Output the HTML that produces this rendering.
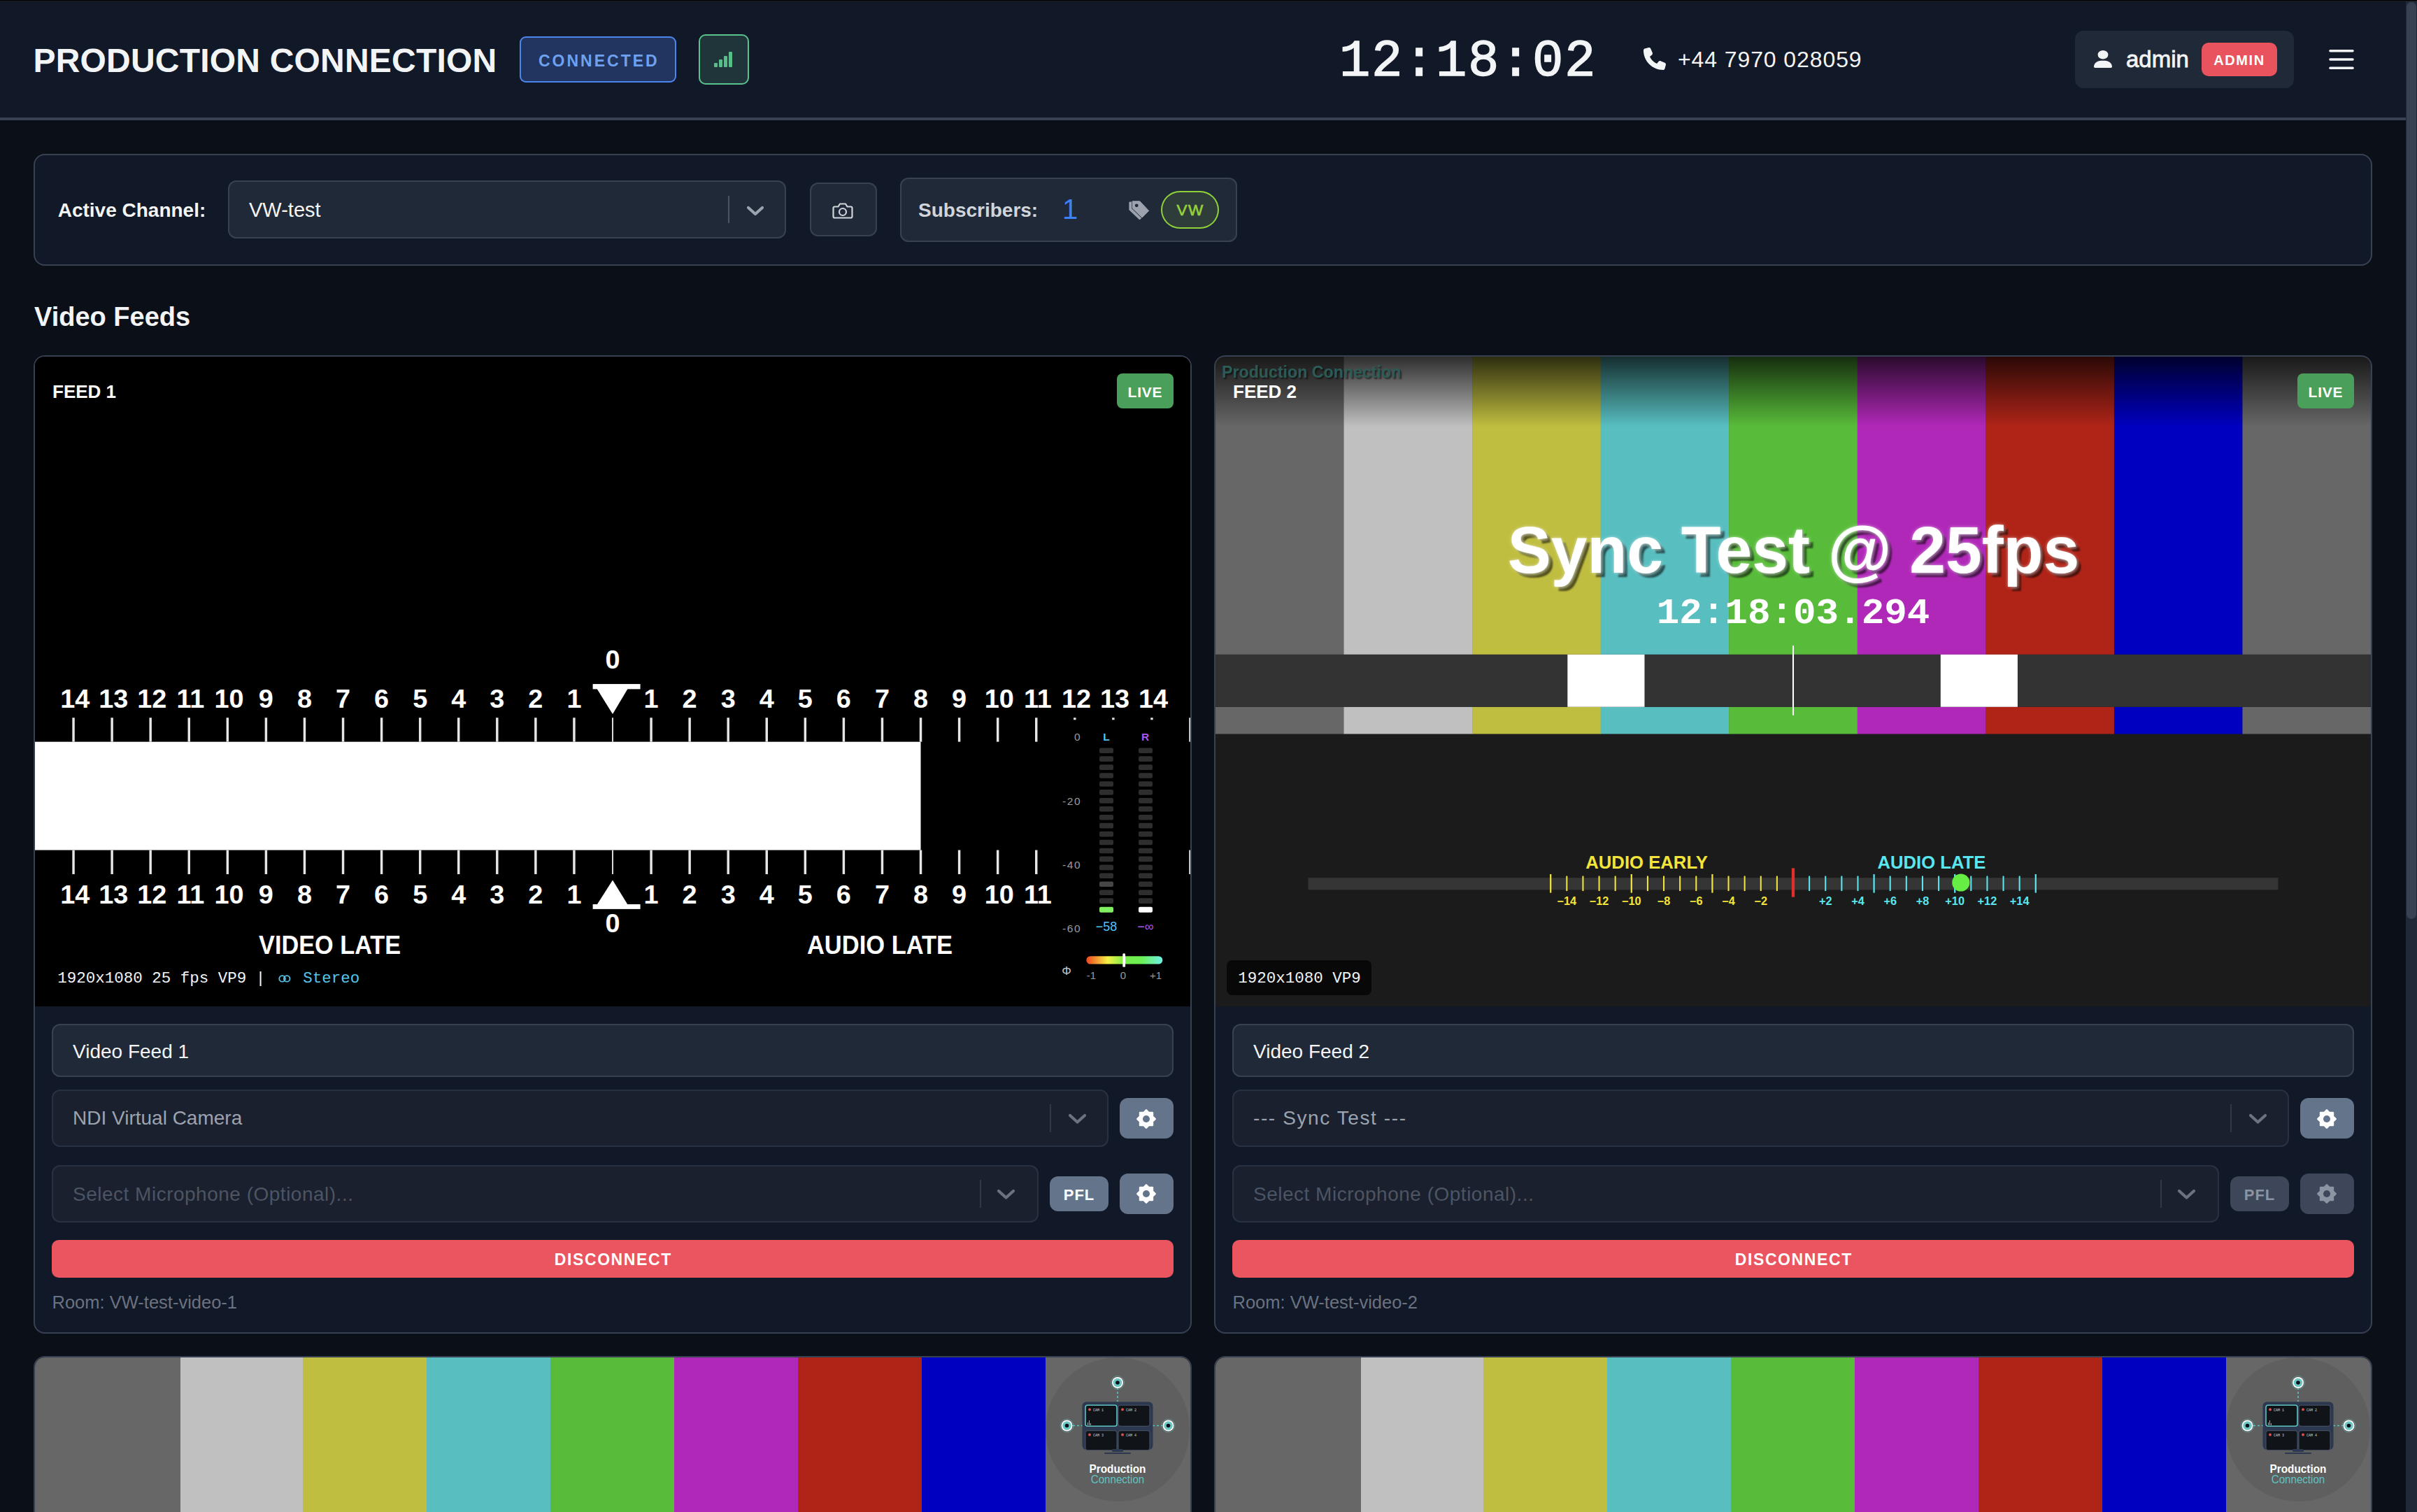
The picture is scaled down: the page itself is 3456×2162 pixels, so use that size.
<!DOCTYPE html>
<html><head><meta charset="utf-8"><title>Production Connection</title>
<style>
html,body{margin:0;padding:0;}
body{width:3456px;height:2162px;overflow:hidden;background:#0b0f18;position:relative;font-family:'Liberation Sans', sans-serif;}
.t{position:absolute;white-space:pre;}
.b{position:absolute;box-sizing:border-box;}
svg{position:absolute;overflow:visible;}
@media (max-width:2600px){html{zoom:0.5;}}
</style></head><body>

<div class="b" style="left:0.00px;top:0.00px;width:3456.00px;height:168.00px;background:#111827;border-radius:0px;"></div>
<div class="b" style="left:0.00px;top:168.00px;width:3440.00px;height:4.00px;background:#374151;border-radius:0px;"></div>
<div class="b" style="left:0.00px;top:0.00px;width:3456.00px;height:1.00px;background:#000;border-radius:0px;"></div>
<div class="b" style="left:0.00px;top:1.00px;width:3456.00px;height:1.00px;background:#1a1c1f;border-radius:0px;"></div>
<div class="t" style="left:47.50px;top:62.67px;font-size:48px;line-height:48px;color:#f3f4f6;font-weight:bold;font-family:'Liberation Sans', sans-serif;letter-spacing:0.2px;">PRODUCTION CONNECTION</div>
<div class="b" style="left:743.00px;top:52.00px;width:224.00px;height:66.00px;background:#223560;border-radius:9px;box-shadow:inset 0 0 0 2px #4d85ee;"></div>
<div class="t" style="left:770.00px;top:75.83px;font-size:23px;line-height:23px;color:#6ea2f0;font-weight:bold;font-family:'Liberation Sans', sans-serif;letter-spacing:3px;">CONNECTED</div>
<div class="b" style="left:999.00px;top:49.00px;width:72.00px;height:72.00px;background:#1f353a;border-radius:10px;box-shadow:inset 0 0 0 2px #5ac28c;"></div>
<svg style="left:1020px;top:73px" width="30" height="24" viewBox="0 0 30 24"><rect x="1" y="17" width="5" height="6" rx="1" fill="#58bd88"/><rect x="8" y="12" width="5" height="11" rx="1" fill="#58bd88"/><rect x="15" y="7" width="5" height="16" rx="1" fill="#58bd88"/><rect x="22" y="1" width="5" height="22" rx="1" fill="#58bd88"/></svg>
<div class="t" style="left:1915.00px;top:51.48px;font-size:74px;line-height:74px;color:#f3f4f6;font-weight:normal;font-family:'Liberation Mono', monospace;letter-spacing:1.6px;-webkit-text-stroke:1.4px #f3f4f6;">12:18:02</div>
<svg style="left:2350px;top:68px" width="32" height="32" viewBox="0 0 512 512"><path fill="#f3f4f6" d="M164.9 24.6c-7.7-18.6-28-28.5-47.4-23.2l-88 24C12.1 30.2 0 46 0 64C0 311.4 200.6 512 448 512c18 0 33.8-12.1 38.6-29.5l24-88c5.3-19.4-4.6-39.7-23.2-47.4l-96-40c-16.3-6.8-35.2-2.1-46.3 11.6L304.7 368C234.3 334.7 177.3 277.7 144 207.3L193.3 167c13.7-11.2 18.4-30 11.6-46.3l-40-96z"/></svg>
<div class="t" style="left:2399.00px;top:69.31px;font-size:32px;line-height:32px;color:#f3f4f6;font-weight:normal;font-family:'Liberation Sans', sans-serif;letter-spacing:0.9px;">+44 7970 028059</div>
<div class="b" style="left:2967.00px;top:44.00px;width:313.00px;height:82.00px;background:#1f2937;border-radius:12px;"></div>
<svg style="left:2994px;top:71.5px" width="26" height="25" viewBox="0 0 448 512" preserveAspectRatio="none"><path fill="#f3f4f6" d="M224 256A128 128 0 1 0 224 0a128 128 0 1 0 0 256zm-45.7 48C79.8 304 0 383.8 0 482.3C0 498.7 13.3 512 29.7 512H418.3c16.4 0 29.7-13.3 29.7-29.7C448 383.8 368.2 304 269.7 304H178.3z"/></svg>
<div class="t" style="left:3040.00px;top:68.37px;font-size:33px;line-height:33px;color:#f3f4f6;font-weight:normal;font-family:'Liberation Sans', sans-serif;-webkit-text-stroke:0.8px #f3f4f6;">admin</div>
<div class="b" style="left:3148.00px;top:61.00px;width:108.00px;height:48.00px;background:#e9535e;border-radius:10px;"></div>
<div class="t" style="left:2202.00px;width:2000px;text-align:center;top:76.37px;font-size:20px;line-height:20px;color:#ffffff;font-weight:bold;font-family:'Liberation Sans', sans-serif;letter-spacing:1.6px;">ADMIN</div>
<svg style="left:3328px;top:68px" width="40" height="34" viewBox="0 0 40 34"><g stroke="#f3f4f6" stroke-width="3.6" stroke-linecap="round"><line x1="4" y1="4.7" x2="36" y2="4.7"/><line x1="4" y1="17" x2="36" y2="17"/><line x1="4" y1="29.3" x2="36" y2="29.3"/></g></svg>
<div class="b" style="left:3440.00px;top:2.00px;width:16.00px;height:2160.00px;background:#1f2937;border-radius:0px;"></div>
<div class="b" style="left:3441.00px;top:3.00px;width:14.00px;height:1311.00px;background:#374151;border-radius:7px;"></div>
<div class="b" style="left:48.00px;top:220.00px;width:3344.00px;height:160.00px;background:#111827;border-radius:16px;box-shadow:inset 0 0 0 2px #374151;"></div>
<div class="t" style="left:82.70px;top:287.30px;font-size:28px;line-height:28px;color:#f3f4f6;font-weight:bold;font-family:'Liberation Sans', sans-serif;">Active Channel:</div>
<div class="b" style="left:326.00px;top:258.00px;width:798.00px;height:83.00px;background:#1f2937;border-radius:12px;box-shadow:inset 0 0 0 2px #374151;"></div>
<div class="t" style="left:356.00px;top:286.45px;font-size:29px;line-height:29px;color:#f3f4f6;font-weight:normal;font-family:'Liberation Sans', sans-serif;">VW-test</div>
<div class="b" style="left:1041.00px;top:280.00px;width:2.00px;height:39.00px;background:#4b5563;border-radius:0px;"></div>
<svg style="left:1066px;top:292px" width="28" height="20" viewBox="0 0 28 20"><polyline points="4,5 14,14 24,5" fill="none" stroke="#9ca3af" stroke-width="4.2" stroke-linecap="round" stroke-linejoin="round"/></svg>
<div class="b" style="left:1158.00px;top:261.00px;width:96.00px;height:77.00px;background:#1f2937;border-radius:12px;box-shadow:inset 0 0 0 2px #374151;"></div>
<svg style="left:1189px;top:288px" width="32" height="26" viewBox="0 0 32 26"><path d="M4.5 7.5h5l2.5-4h8l2.5 4h5a2 2 0 0 1 2 2v12a2 2 0 0 1-2 2h-23a2 2 0 0 1-2-2v-12a2 2 0 0 1 2-2z" fill="none" stroke="#d1d5db" stroke-width="2.2" stroke-linejoin="round"/><circle cx="16" cy="15" r="5" fill="none" stroke="#d1d5db" stroke-width="2.2"/></svg>
<div class="b" style="left:1287.00px;top:254.00px;width:482.00px;height:92.00px;background:#1f2937;border-radius:12px;box-shadow:inset 0 0 0 2px #374151;"></div>
<div class="t" style="left:1313.00px;top:286.80px;font-size:28px;line-height:28px;color:#d1d5db;font-weight:bold;font-family:'Liberation Sans', sans-serif;">Subscribers:</div>
<div class="t" style="left:1519.00px;top:278.94px;font-size:40px;line-height:40px;color:#3b82f6;font-weight:normal;font-family:'Liberation Sans', sans-serif;">1</div>
<svg style="left:1600px;top:260px" width="60" height="70" viewBox="0 0 60 70"><path d="M15.6 29.8 L26.2 29.8 L39.1 43.4 L29.5 53 L15.6 39.7 Z" fill="#9ca3af" stroke="#9ca3af" stroke-width="2.4" stroke-linejoin="round"/><path d="M19.2 27.8 L29.8 27.8 L42.7 41.4 L33.1 51 L19.2 37.7 Z" fill="#9ca3af" stroke="#1f2937" stroke-width="2.2" stroke-linejoin="round"/><path d="M19.2 27.8 L29.8 27.8 L42.7 41.4 L33.1 51 L19.2 37.7 Z" fill="#9ca3af" stroke="#9ca3af" stroke-width="1" stroke-linejoin="round"/><circle cx="25.2" cy="33.8" r="2.4" fill="#1f2937"/></svg>
<div class="b" style="left:1660.00px;top:273.00px;width:83.00px;height:54.00px;background:#2e3d3a;border-radius:27px;box-shadow:inset 0 0 0 2px #8fd13a;"></div>
<div class="t" style="left:702.00px;width:2000px;text-align:center;top:290.45px;font-size:22.5px;line-height:22.5px;color:#96d03c;font-weight:normal;font-family:'Liberation Sans', sans-serif;letter-spacing:1.5px;-webkit-text-stroke:0.7px #96d03c;">VW</div>
<div class="t" style="left:49.00px;top:434.03px;font-size:38px;line-height:38px;color:#f3f4f6;font-weight:bold;font-family:'Liberation Sans', sans-serif;">Video Feeds</div>
<div class="b" style="left:48.00px;top:508.00px;width:1656.00px;height:1399.00px;background:#111827;border-radius:16px;box-shadow:inset 0 0 0 2px #374151;"></div>
<div class="b" style="left:50px;top:510px;width:1652px;height:929.25px;border-radius:14px 14px 0 0;overflow:hidden;background:#000">
<div style="position:relative;left:-50px;top:-510px;width:3456px;height:1500px">
<svg style="left:50px;top:510px" width="1652" height="929.25" viewBox="0 0 1920 1080"><style>.n{font-family:'Liberation Sans',sans-serif;font-weight:bold;font-size:44px;fill:#fff;text-anchor:middle}</style><rect x="0" y="0" width="1920" height="1080" fill="#000"/><rect x="0" y="640" width="1472" height="180" fill="#fff"/><rect x="62.0" y="600" width="4" height="40" fill="#e6e6e6"/><rect x="62.0" y="820" width="4" height="40" fill="#e6e6e6"/><rect x="126.0" y="600" width="4" height="40" fill="#e6e6e6"/><rect x="126.0" y="820" width="4" height="40" fill="#e6e6e6"/><rect x="190.0" y="600" width="4" height="40" fill="#e6e6e6"/><rect x="190.0" y="820" width="4" height="40" fill="#e6e6e6"/><rect x="254.0" y="600" width="4" height="40" fill="#e6e6e6"/><rect x="254.0" y="820" width="4" height="40" fill="#e6e6e6"/><rect x="318.0" y="600" width="4" height="40" fill="#e6e6e6"/><rect x="318.0" y="820" width="4" height="40" fill="#e6e6e6"/><rect x="382.0" y="600" width="4" height="40" fill="#e6e6e6"/><rect x="382.0" y="820" width="4" height="40" fill="#e6e6e6"/><rect x="446.0" y="600" width="4" height="40" fill="#e6e6e6"/><rect x="446.0" y="820" width="4" height="40" fill="#e6e6e6"/><rect x="510.0" y="600" width="4" height="40" fill="#e6e6e6"/><rect x="510.0" y="820" width="4" height="40" fill="#e6e6e6"/><rect x="574.0" y="600" width="4" height="40" fill="#e6e6e6"/><rect x="574.0" y="820" width="4" height="40" fill="#e6e6e6"/><rect x="638.0" y="600" width="4" height="40" fill="#e6e6e6"/><rect x="638.0" y="820" width="4" height="40" fill="#e6e6e6"/><rect x="702.0" y="600" width="4" height="40" fill="#e6e6e6"/><rect x="702.0" y="820" width="4" height="40" fill="#e6e6e6"/><rect x="766.0" y="600" width="4" height="40" fill="#e6e6e6"/><rect x="766.0" y="820" width="4" height="40" fill="#e6e6e6"/><rect x="830.0" y="600" width="4" height="40" fill="#e6e6e6"/><rect x="830.0" y="820" width="4" height="40" fill="#e6e6e6"/><rect x="894.0" y="600" width="4" height="40" fill="#e6e6e6"/><rect x="894.0" y="820" width="4" height="40" fill="#e6e6e6"/><rect x="958.9" y="600" width="2.2" height="40" fill="#e6e6e6"/><rect x="958.9" y="820" width="2.2" height="40" fill="#e6e6e6"/><rect x="1022.0" y="600" width="4" height="40" fill="#e6e6e6"/><rect x="1022.0" y="820" width="4" height="40" fill="#e6e6e6"/><rect x="1086.0" y="600" width="4" height="40" fill="#e6e6e6"/><rect x="1086.0" y="820" width="4" height="40" fill="#e6e6e6"/><rect x="1150.0" y="600" width="4" height="40" fill="#e6e6e6"/><rect x="1150.0" y="820" width="4" height="40" fill="#e6e6e6"/><rect x="1214.0" y="600" width="4" height="40" fill="#e6e6e6"/><rect x="1214.0" y="820" width="4" height="40" fill="#e6e6e6"/><rect x="1278.0" y="600" width="4" height="40" fill="#e6e6e6"/><rect x="1278.0" y="820" width="4" height="40" fill="#e6e6e6"/><rect x="1342.0" y="600" width="4" height="40" fill="#e6e6e6"/><rect x="1342.0" y="820" width="4" height="40" fill="#e6e6e6"/><rect x="1406.0" y="600" width="4" height="40" fill="#e6e6e6"/><rect x="1406.0" y="820" width="4" height="40" fill="#e6e6e6"/><rect x="1470.0" y="600" width="4" height="40" fill="#e6e6e6"/><rect x="1470.0" y="820" width="4" height="40" fill="#e6e6e6"/><rect x="1534.0" y="600" width="4" height="40" fill="#e6e6e6"/><rect x="1534.0" y="820" width="4" height="40" fill="#e6e6e6"/><rect x="1598.0" y="600" width="4" height="40" fill="#e6e6e6"/><rect x="1598.0" y="820" width="4" height="40" fill="#e6e6e6"/><rect x="1662.0" y="600" width="4" height="40" fill="#e6e6e6"/><rect x="1662.0" y="820" width="4" height="40" fill="#e6e6e6"/><rect x="1726" y="600" width="4" height="3.5" fill="#e6e6e6"/><rect x="1790" y="600" width="4" height="3.5" fill="#e6e6e6"/><rect x="1854" y="600" width="4" height="3.5" fill="#e6e6e6"/><rect x="1918.0" y="600" width="4" height="40" fill="#e6e6e6"/><rect x="1918.0" y="820" width="4" height="40" fill="#e6e6e6"/><text x="66.5" y="583" class="n">14</text><text x="66.5" y="909" class="n">14</text><text x="130.5" y="583" class="n">13</text><text x="130.5" y="909" class="n">13</text><text x="194.5" y="583" class="n">12</text><text x="194.5" y="909" class="n">12</text><text x="258.5" y="583" class="n">11</text><text x="258.5" y="909" class="n">11</text><text x="322.5" y="583" class="n">10</text><text x="322.5" y="909" class="n">10</text><text x="384" y="583" class="n">9</text><text x="384" y="909" class="n">9</text><text x="448" y="583" class="n">8</text><text x="448" y="909" class="n">8</text><text x="512" y="583" class="n">7</text><text x="512" y="909" class="n">7</text><text x="576" y="583" class="n">6</text><text x="576" y="909" class="n">6</text><text x="640" y="583" class="n">5</text><text x="640" y="909" class="n">5</text><text x="704" y="583" class="n">4</text><text x="704" y="909" class="n">4</text><text x="768" y="583" class="n">3</text><text x="768" y="909" class="n">3</text><text x="832" y="583" class="n">2</text><text x="832" y="909" class="n">2</text><text x="896" y="583" class="n">1</text><text x="896" y="909" class="n">1</text><text x="1024" y="583" class="n">1</text><text x="1024" y="909" class="n">1</text><text x="1088" y="583" class="n">2</text><text x="1088" y="909" class="n">2</text><text x="1152" y="583" class="n">3</text><text x="1152" y="909" class="n">3</text><text x="1216" y="583" class="n">4</text><text x="1216" y="909" class="n">4</text><text x="1280" y="583" class="n">5</text><text x="1280" y="909" class="n">5</text><text x="1344" y="583" class="n">6</text><text x="1344" y="909" class="n">6</text><text x="1408" y="583" class="n">7</text><text x="1408" y="909" class="n">7</text><text x="1472" y="583" class="n">8</text><text x="1472" y="909" class="n">8</text><text x="1536" y="583" class="n">9</text><text x="1536" y="909" class="n">9</text><text x="1602.5" y="583" class="n">10</text><text x="1602.5" y="909" class="n">10</text><text x="1666.5" y="583" class="n">11</text><text x="1666.5" y="909" class="n">11</text><text x="1730.5" y="583" class="n">12</text><text x="1794.5" y="583" class="n">13</text><text x="1858.5" y="583" class="n">14</text><text x="960" y="518" class="n">0</text><text x="960" y="956" class="n">0</text><rect x="927" y="544" width="79" height="8.5" fill="#fff"/><polygon points="934,552 985,552 960,594" fill="#fff"/><rect x="927" y="910" width="79" height="8" fill="#fff"/><polygon points="934,910.5 985,910.5 960,870" fill="#fff"/><text x="490" y="992.5" class="n" textLength="236" lengthAdjust="spacingAndGlyphs" style="font-size:42px">VIDEO LATE</text><text x="1404" y="992.5" class="n" textLength="242" lengthAdjust="spacingAndGlyphs" style="font-size:42px">AUDIO LATE</text></svg>
<svg style="left:1510px;top:1025px" width="200" height="400" viewBox="0 0 200 400"><g style="font-family:'Liberation Sans',sans-serif"><text x="36.3" y="33.9" fill="#9a9a9a" style="font-size:15.5px;font-weight:normal;text-anchor:end;letter-spacing:1.6px">0</text><text x="36.3" y="125.6" fill="#9a9a9a" style="font-size:15.5px;font-weight:normal;text-anchor:end;letter-spacing:1.6px">-20</text><text x="36.3" y="217.3" fill="#9a9a9a" style="font-size:15.5px;font-weight:normal;text-anchor:end;letter-spacing:1.6px">-40</text><text x="36.3" y="307.8" fill="#9a9a9a" style="font-size:15.5px;font-weight:normal;text-anchor:end;letter-spacing:1.6px">-60</text><text x="72.0" y="33.9" fill="#4fc3f7" style="font-size:15.5px;font-weight:bold;text-anchor:middle;letter-spacing:0px">L</text><text x="127.6" y="33.9" fill="#a855f7" style="font-size:15.5px;font-weight:bold;text-anchor:middle;letter-spacing:0px">R</text><rect x="62" y="44.40" width="20" height="7.6" rx="2" fill="#2e2e2e"/><rect x="62" y="56.34" width="20" height="7.6" rx="2" fill="#2e2e2e"/><rect x="62" y="68.28" width="20" height="7.6" rx="2" fill="#2e2e2e"/><rect x="62" y="80.22" width="20" height="7.6" rx="2" fill="#2e2e2e"/><rect x="62" y="92.16" width="20" height="7.6" rx="2" fill="#2e2e2e"/><rect x="62" y="104.10" width="20" height="7.6" rx="2" fill="#2e2e2e"/><rect x="62" y="116.04" width="20" height="7.6" rx="2" fill="#2e2e2e"/><rect x="62" y="127.98" width="20" height="7.6" rx="2" fill="#2e2e2e"/><rect x="62" y="139.92" width="20" height="7.6" rx="2" fill="#2e2e2e"/><rect x="62" y="151.86" width="20" height="7.6" rx="2" fill="#2e2e2e"/><rect x="62" y="163.80" width="20" height="7.6" rx="2" fill="#2e2e2e"/><rect x="62" y="175.74" width="20" height="7.6" rx="2" fill="#2e2e2e"/><rect x="62" y="187.68" width="20" height="7.6" rx="2" fill="#2e2e2e"/><rect x="62" y="199.62" width="20" height="7.6" rx="2" fill="#2e2e2e"/><rect x="62" y="211.56" width="20" height="7.6" rx="2" fill="#2e2e2e"/><rect x="62" y="223.50" width="20" height="7.6" rx="2" fill="#2e2e2e"/><rect x="62" y="235.44" width="20" height="7.6" rx="2" fill="#474747"/><rect x="62" y="247.38" width="20" height="7.6" rx="2" fill="#2e2e2e"/><rect x="62" y="259.32" width="20" height="7.6" rx="2" fill="#2e2e2e"/><rect x="118" y="44.40" width="20" height="7.6" rx="2" fill="#2e2e2e"/><rect x="118" y="56.34" width="20" height="7.6" rx="2" fill="#2e2e2e"/><rect x="118" y="68.28" width="20" height="7.6" rx="2" fill="#2e2e2e"/><rect x="118" y="80.22" width="20" height="7.6" rx="2" fill="#2e2e2e"/><rect x="118" y="92.16" width="20" height="7.6" rx="2" fill="#2e2e2e"/><rect x="118" y="104.10" width="20" height="7.6" rx="2" fill="#2e2e2e"/><rect x="118" y="116.04" width="20" height="7.6" rx="2" fill="#2e2e2e"/><rect x="118" y="127.98" width="20" height="7.6" rx="2" fill="#2e2e2e"/><rect x="118" y="139.92" width="20" height="7.6" rx="2" fill="#2e2e2e"/><rect x="118" y="151.86" width="20" height="7.6" rx="2" fill="#2e2e2e"/><rect x="118" y="163.80" width="20" height="7.6" rx="2" fill="#2e2e2e"/><rect x="118" y="175.74" width="20" height="7.6" rx="2" fill="#2e2e2e"/><rect x="118" y="187.68" width="20" height="7.6" rx="2" fill="#2e2e2e"/><rect x="118" y="199.62" width="20" height="7.6" rx="2" fill="#2e2e2e"/><rect x="118" y="211.56" width="20" height="7.6" rx="2" fill="#2e2e2e"/><rect x="118" y="223.50" width="20" height="7.6" rx="2" fill="#2e2e2e"/><rect x="118" y="235.44" width="20" height="7.6" rx="2" fill="#2e2e2e"/><rect x="118" y="247.38" width="20" height="7.6" rx="2" fill="#2e2e2e"/><rect x="118" y="259.32" width="20" height="7.6" rx="2" fill="#2e2e2e"/><rect x="62" y="271.70000000000005" width="20" height="8" rx="2" fill="#80f060"/><rect x="118" y="271.70000000000005" width="20" height="8" rx="2" fill="#ffffff"/><text x="72.0" y="306.0" fill="#4fc3f7" style="font-size:18px;font-weight:normal;text-anchor:middle;letter-spacing:0px">−58</text><text x="128.0" y="306.0" fill="#a855f7" style="font-size:18px;font-weight:normal;text-anchor:middle;letter-spacing:0px">−∞</text><defs><linearGradient id="ph" x1="0" x2="1"><stop offset="0" stop-color="#f0441e"/><stop offset="0.28" stop-color="#f6f046"/><stop offset="0.5" stop-color="#78ee48"/><stop offset="0.72" stop-color="#6cf056"/><stop offset="1" stop-color="#6ef0e6"/></linearGradient></defs><rect x="43.299999999999955" y="342.20000000000005" width="109" height="11.4" rx="5.7" fill="url(#ph)"/><rect x="95.29999999999995" y="338.29999999999995" width="3.8" height="19.5" rx="1.5" fill="#fff"/><text x="15.0" y="369.4" fill="#c0c0c0" style="font-size:17px;font-weight:normal;text-anchor:middle;letter-spacing:0px">Φ</text><text x="50.5" y="375.0" fill="#9a9a9a" style="font-size:15px;font-weight:normal;text-anchor:middle;letter-spacing:0px">-1</text><text x="95.8" y="375.0" fill="#9a9a9a" style="font-size:15px;font-weight:normal;text-anchor:middle;letter-spacing:0px">0</text><text x="142.5" y="375.0" fill="#9a9a9a" style="font-size:15px;font-weight:normal;text-anchor:middle;letter-spacing:0px">+1</text></g></svg>
<div class="b" style="left:50px;top:510px;width:1652px;height:100px;background:linear-gradient(rgba(0,0,0,0.76),rgba(0,0,0,0))"></div>
</div></div>
<div class="t" style="left:75.00px;top:547.39px;font-size:26px;line-height:26px;color:#ffffff;font-weight:bold;font-family:'Liberation Sans', sans-serif;">FEED 1</div>
<div class="b" style="left:1597.00px;top:534.00px;width:81.00px;height:50.00px;background:#4a9f5a;border-radius:8px;"></div>
<div class="t" style="left:637.50px;width:2000px;text-align:center;top:550.42px;font-size:21px;line-height:21px;color:#ffffff;font-weight:bold;font-family:'Liberation Sans', sans-serif;letter-spacing:0.8px;">LIVE</div>
<div class="t" style="left:82.20px;top:1387.75px;font-size:22.5px;line-height:22.5px;color:#f3f4f6;font-weight:normal;font-family:'Liberation Mono', monospace;">1920x1080 25 fps VP9 | <span style="color:#56c4e6">   Stereo</span></div>
<svg style="left:398px;top:1392px" width="18" height="14" viewBox="0 0 18 14"><g fill="none" stroke="#56c4e6" stroke-width="1.8"><circle cx="5.6" cy="7.4" r="4.3"/><circle cx="12.2" cy="7.4" r="4.3"/></g></svg>
<div class="b" style="left:74.00px;top:1464.00px;width:1604.00px;height:76.00px;background:#1f2937;border-radius:12px;box-shadow:inset 0 0 0 2px #374151;"></div>
<div class="t" style="left:104.00px;top:1490.10px;font-size:28px;line-height:28px;color:#f3f4f6;font-weight:normal;font-family:'Liberation Sans', sans-serif;">Video Feed 1</div>
<div class="b" style="left:74.00px;top:1558.00px;width:1511.00px;height:82.00px;background:#1a202e;border-radius:12px;box-shadow:inset 0 0 0 2px #283142;"></div>
<div class="t" style="left:104.00px;top:1585.30px;font-size:28px;line-height:28px;color:#9ca3af;font-weight:normal;font-family:'Liberation Sans', sans-serif;">NDI Virtual Camera</div>
<div class="b" style="left:1501.00px;top:1579.00px;width:2.00px;height:40.00px;background:#2f3847;border-radius:0px;"></div>
<svg style="left:1527px;top:1590.7px" width="28" height="20" viewBox="0 0 28 20"><polyline points="3,4 13.5,13.5 24,4" fill="none" stroke="#6b7280" stroke-width="4.2" stroke-linecap="round" stroke-linejoin="round"/></svg>
<div class="b" style="left:1601.00px;top:1570.00px;width:77.00px;height:58.00px;background:#64748b;border-radius:12px;"></div>
<svg style="left:1619px;top:1580px" width="40" height="40" viewBox="-20 -20 40 40"><polygon points="0.00,-12.60 3.67,-8.87 8.91,-8.91 8.87,-3.67 12.60,0.00 8.87,3.67 8.91,8.91 3.67,8.87 0.00,12.60 -3.67,8.87 -8.91,8.91 -8.87,3.67 -12.60,0.00 -8.87,-3.67 -8.91,-8.91 -3.67,-8.87" fill="#ffffff" stroke="#ffffff" stroke-width="2.6" stroke-linejoin="round"/><circle cx="0" cy="0" r="5" fill="#64748b"/></svg>
<div class="b" style="left:74.00px;top:1666.00px;width:1411.00px;height:82.00px;background:#1a202e;border-radius:12px;box-shadow:inset 0 0 0 2px #283142;"></div>
<div class="t" style="left:104.00px;top:1694.10px;font-size:28px;line-height:28px;color:#4b5563;font-weight:normal;font-family:'Liberation Sans', sans-serif;letter-spacing:0.5px;">Select Microphone (Optional)...</div>
<div class="b" style="left:1401.00px;top:1687.00px;width:2.00px;height:40.00px;background:#2f3847;border-radius:0px;"></div>
<svg style="left:1425px;top:1698.7px" width="28" height="20" viewBox="0 0 28 20"><polyline points="3,4 13.5,13.5 24,4" fill="none" stroke="#6b7280" stroke-width="4.2" stroke-linecap="round" stroke-linejoin="round"/></svg>
<div class="b" style="left:1501.00px;top:1682.00px;width:84.00px;height:50.00px;background:#64748b;border-radius:12px;"></div>
<div class="t" style="left:543.00px;width:2000px;text-align:center;top:1697.88px;font-size:22px;line-height:22px;color:#ffffff;font-weight:bold;font-family:'Liberation Sans', sans-serif;letter-spacing:1px;">PFL</div>
<div class="b" style="left:1601.00px;top:1678.00px;width:77.00px;height:58.00px;background:#64748b;border-radius:12px;"></div>
<svg style="left:1619px;top:1687px" width="40" height="40" viewBox="-20 -20 40 40"><polygon points="0.00,-12.60 3.67,-8.87 8.91,-8.91 8.87,-3.67 12.60,0.00 8.87,3.67 8.91,8.91 3.67,8.87 0.00,12.60 -3.67,8.87 -8.91,8.91 -8.87,3.67 -12.60,0.00 -8.87,-3.67 -8.91,-8.91 -3.67,-8.87" fill="#ffffff" stroke="#ffffff" stroke-width="2.6" stroke-linejoin="round"/><circle cx="0" cy="0" r="5" fill="#64748b"/></svg>
<div class="b" style="left:74.00px;top:1773.00px;width:1604.00px;height:54.00px;background:#ea5560;border-radius:10px;"></div>
<div class="t" style="left:-123.20px;width:2000px;text-align:center;top:1789.73px;font-size:23px;line-height:23px;color:#ffffff;font-weight:bold;font-family:'Liberation Sans', sans-serif;letter-spacing:1.6px;">DISCONNECT</div>
<div class="t" style="left:74.50px;top:1849.61px;font-size:25.5px;line-height:25.5px;color:#6b7280;font-weight:normal;font-family:'Liberation Sans', sans-serif;">Room: VW-test-video-1</div>
<div class="b" style="left:1736.00px;top:508.00px;width:1656.00px;height:1399.00px;background:#111827;border-radius:16px;box-shadow:inset 0 0 0 2px #374151;"></div>
<div class="b" style="left:1738px;top:510px;width:1652px;height:929.25px;border-radius:14px 14px 0 0;overflow:hidden;background:#000">
<div style="position:relative;left:-1738px;top:-510px;width:3456px;height:1500px">
<svg style="left:1738px;top:510px" width="1652" height="929.25" viewBox="0 0 1920 1080"><defs><filter id="ts" x="-10%" y="-30%" width="120%" height="160%"><feGaussianBlur in="SourceAlpha" stdDeviation="2.5" result="g"/><feFlood flood-color="#fff" flood-opacity="0.55"/><feComposite in2="g" operator="in" result="glow"/><feOffset in="SourceAlpha" dx="7" dy="7" result="o"/><feGaussianBlur in="o" stdDeviation="1.2" result="ob"/><feFlood flood-color="#000" flood-opacity="0.6"/><feComposite in2="ob" operator="in" result="sh"/><feMerge><feMergeNode in="sh"/><feMergeNode in="glow"/><feMergeNode in="SourceGraphic"/></feMerge></filter></defs><style>.r{font-family:'Liberation Sans',sans-serif;font-weight:bold;font-size:19px;text-anchor:middle}.a{font-family:'Liberation Sans',sans-serif;font-weight:bold;font-size:29px;text-anchor:middle}</style><rect x="0" y="0" width="1920" height="1080" fill="#1b1b1b"/><rect x="0.00" y="0" width="213.83" height="495" fill="#676767"/><rect x="0.00" y="582" width="213.83" height="45" fill="#676767"/><rect x="213.33" y="0" width="213.83" height="495" fill="#c0c0c0"/><rect x="213.33" y="582" width="213.83" height="45" fill="#c0c0c0"/><rect x="426.67" y="0" width="213.83" height="495" fill="#c0be40"/><rect x="426.67" y="582" width="213.83" height="45" fill="#c0be40"/><rect x="640.00" y="0" width="213.83" height="495" fill="#58bec0"/><rect x="640.00" y="582" width="213.83" height="45" fill="#58bec0"/><rect x="853.33" y="0" width="213.83" height="495" fill="#58bc3a"/><rect x="853.33" y="582" width="213.83" height="45" fill="#58bc3a"/><rect x="1066.67" y="0" width="213.83" height="495" fill="#b028b8"/><rect x="1066.67" y="582" width="213.83" height="45" fill="#b028b8"/><rect x="1280.00" y="0" width="213.83" height="495" fill="#b02418"/><rect x="1280.00" y="582" width="213.83" height="45" fill="#b02418"/><rect x="1493.33" y="0" width="213.83" height="495" fill="#0000c0"/><rect x="1493.33" y="582" width="213.83" height="45" fill="#0000c0"/><rect x="1706.67" y="0" width="213.83" height="495" fill="#676767"/><rect x="1706.67" y="582" width="213.83" height="45" fill="#676767"/><rect x="0" y="495" width="1920" height="87" fill="#333333"/><rect x="585" y="495" width="128" height="87" fill="#fff"/><rect x="1205" y="495" width="128" height="87" fill="#fff"/><rect x="958.8" y="480" width="2.4" height="116" fill="#fff"/><text x="960.5" y="359.5" text-anchor="middle" textLength="950" lengthAdjust="spacingAndGlyphs" style="font-family:'Liberation Sans',sans-serif;font-weight:bold;font-size:110px;fill:#fff;filter:url(#ts)">Sync Test @ 25fps</text><text x="960" y="442.5" text-anchor="middle" textLength="454" lengthAdjust="spacingAndGlyphs" style="font-family:'Liberation Mono',monospace;font-weight:bold;font-size:60px;fill:#fff">12:18:03.294</text><rect x="154" y="866" width="1612" height="20" fill="#353535"/><rect x="555.65" y="860" width="2.6" height="31" fill="#f2e43a"/><rect x="582.62" y="863" width="2.4" height="25" fill="#f2e43a"/><text x="583.82" y="911" class="r" fill="#f2e43a">−14</text><rect x="609.49" y="863" width="2.4" height="25" fill="#f2e43a"/><rect x="636.36" y="863" width="2.4" height="25" fill="#f2e43a"/><text x="637.56" y="911" class="r" fill="#f2e43a">−12</text><rect x="663.23" y="863" width="2.4" height="25" fill="#f2e43a"/><rect x="690.00" y="860" width="2.6" height="31" fill="#f2e43a"/><text x="691.30" y="911" class="r" fill="#f2e43a">−10</text><rect x="716.97" y="863" width="2.4" height="25" fill="#f2e43a"/><rect x="743.84" y="863" width="2.4" height="25" fill="#f2e43a"/><text x="745.04" y="911" class="r" fill="#f2e43a">−8</text><rect x="770.71" y="863" width="2.4" height="25" fill="#f2e43a"/><rect x="797.58" y="863" width="2.4" height="25" fill="#f2e43a"/><text x="798.78" y="911" class="r" fill="#f2e43a">−6</text><rect x="824.35" y="860" width="2.6" height="31" fill="#f2e43a"/><rect x="851.32" y="863" width="2.4" height="25" fill="#f2e43a"/><text x="852.52" y="911" class="r" fill="#f2e43a">−4</text><rect x="878.19" y="863" width="2.4" height="25" fill="#f2e43a"/><rect x="905.06" y="863" width="2.4" height="25" fill="#f2e43a"/><text x="906.26" y="911" class="r" fill="#f2e43a">−2</text><rect x="931.93" y="863" width="2.4" height="25" fill="#f2e43a"/><rect x="985.67" y="863" width="2.4" height="25" fill="#5ae6ee"/><rect x="1012.54" y="863" width="2.4" height="25" fill="#5ae6ee"/><text x="1013.74" y="911" class="r" fill="#5ae6ee">+2</text><rect x="1039.41" y="863" width="2.4" height="25" fill="#5ae6ee"/><rect x="1066.28" y="863" width="2.4" height="25" fill="#5ae6ee"/><text x="1067.48" y="911" class="r" fill="#5ae6ee">+4</text><rect x="1093.05" y="860" width="2.6" height="31" fill="#5ae6ee"/><rect x="1120.02" y="863" width="2.4" height="25" fill="#5ae6ee"/><text x="1121.22" y="911" class="r" fill="#5ae6ee">+6</text><rect x="1146.89" y="863" width="2.4" height="25" fill="#5ae6ee"/><rect x="1173.76" y="863" width="2.4" height="25" fill="#5ae6ee"/><text x="1174.96" y="911" class="r" fill="#5ae6ee">+8</text><rect x="1200.63" y="863" width="2.4" height="25" fill="#5ae6ee"/><rect x="1227.40" y="860" width="2.6" height="31" fill="#5ae6ee"/><text x="1228.70" y="911" class="r" fill="#5ae6ee">+10</text><rect x="1254.37" y="863" width="2.4" height="25" fill="#5ae6ee"/><rect x="1281.24" y="863" width="2.4" height="25" fill="#5ae6ee"/><text x="1282.44" y="911" class="r" fill="#5ae6ee">+12</text><rect x="1308.11" y="863" width="2.4" height="25" fill="#5ae6ee"/><rect x="1334.98" y="863" width="2.4" height="25" fill="#5ae6ee"/><text x="1336.18" y="911" class="r" fill="#5ae6ee">+14</text><rect x="1361.75" y="860" width="2.6" height="31" fill="#5ae6ee"/><rect x="957.5" y="850" width="5" height="48" fill="#e0302a"/><text x="716.6" y="851" class="a" fill="#f2e43a" textLength="203" lengthAdjust="spacingAndGlyphs">AUDIO EARLY</text><text x="1190" y="851" class="a" fill="#5ae6ee" textLength="180" lengthAdjust="spacingAndGlyphs">AUDIO LATE</text><circle cx="1238.7" cy="874" r="14.6" fill="#66ee44"/></svg>
<div class="b" style="left:1738px;top:510px;width:1652px;height:100px;background:linear-gradient(rgba(0,0,0,0.76),rgba(0,0,0,0))"></div>
</div></div>
<div class="t" style="left:1747.00px;top:521.36px;font-size:23.2px;line-height:23.2px;color:#2b5b57;font-weight:bold;font-family:'Liberation Sans', sans-serif;text-shadow:2px 2px 2px rgba(0,0,0,0.55);">Production Connection</div>
<div class="t" style="left:1763.00px;top:547.39px;font-size:26px;line-height:26px;color:#ffffff;font-weight:bold;font-family:'Liberation Sans', sans-serif;">FEED 2</div>
<div class="b" style="left:3285.00px;top:534.00px;width:81.00px;height:50.00px;background:#4a9f5a;border-radius:8px;"></div>
<div class="t" style="left:2325.50px;width:2000px;text-align:center;top:550.42px;font-size:21px;line-height:21px;color:#ffffff;font-weight:bold;font-family:'Liberation Sans', sans-serif;letter-spacing:0.8px;">LIVE</div>
<div class="b" style="left:1754.00px;top:1373.00px;width:207.00px;height:50.00px;background:rgba(0,0,0,0.7);border-radius:8px;"></div>
<div class="t" style="left:1770.20px;top:1387.75px;font-size:22.5px;line-height:22.5px;color:#f3f4f6;font-weight:normal;font-family:'Liberation Mono', monospace;">1920x1080 VP9</div>
<div class="b" style="left:1762.00px;top:1464.00px;width:1604.00px;height:76.00px;background:#1f2937;border-radius:12px;box-shadow:inset 0 0 0 2px #374151;"></div>
<div class="t" style="left:1792.00px;top:1490.10px;font-size:28px;line-height:28px;color:#f3f4f6;font-weight:normal;font-family:'Liberation Sans', sans-serif;">Video Feed 2</div>
<div class="b" style="left:1762.00px;top:1558.00px;width:1511.00px;height:82.00px;background:#1a202e;border-radius:12px;box-shadow:inset 0 0 0 2px #283142;"></div>
<div class="t" style="left:1792.00px;top:1585.30px;font-size:28px;line-height:28px;color:#9ca3af;font-weight:normal;font-family:'Liberation Sans', sans-serif;letter-spacing:1.6px;">--- Sync Test ---</div>
<div class="b" style="left:3189.00px;top:1579.00px;width:2.00px;height:40.00px;background:#2f3847;border-radius:0px;"></div>
<svg style="left:3215px;top:1590.7px" width="28" height="20" viewBox="0 0 28 20"><polyline points="3,4 13.5,13.5 24,4" fill="none" stroke="#6b7280" stroke-width="4.2" stroke-linecap="round" stroke-linejoin="round"/></svg>
<div class="b" style="left:3289.00px;top:1570.00px;width:77.00px;height:58.00px;background:#64748b;border-radius:12px;"></div>
<svg style="left:3307px;top:1580px" width="40" height="40" viewBox="-20 -20 40 40"><polygon points="0.00,-12.60 3.67,-8.87 8.91,-8.91 8.87,-3.67 12.60,0.00 8.87,3.67 8.91,8.91 3.67,8.87 0.00,12.60 -3.67,8.87 -8.91,8.91 -8.87,3.67 -12.60,0.00 -8.87,-3.67 -8.91,-8.91 -3.67,-8.87" fill="#ffffff" stroke="#ffffff" stroke-width="2.6" stroke-linejoin="round"/><circle cx="0" cy="0" r="5" fill="#64748b"/></svg>
<div class="b" style="left:1762.00px;top:1666.00px;width:1411.00px;height:82.00px;background:#1a202e;border-radius:12px;box-shadow:inset 0 0 0 2px #283142;"></div>
<div class="t" style="left:1792.00px;top:1694.10px;font-size:28px;line-height:28px;color:#4b5563;font-weight:normal;font-family:'Liberation Sans', sans-serif;letter-spacing:0.5px;">Select Microphone (Optional)...</div>
<div class="b" style="left:3089.00px;top:1687.00px;width:2.00px;height:40.00px;background:#2f3847;border-radius:0px;"></div>
<svg style="left:3113px;top:1698.7px" width="28" height="20" viewBox="0 0 28 20"><polyline points="3,4 13.5,13.5 24,4" fill="none" stroke="#6b7280" stroke-width="4.2" stroke-linecap="round" stroke-linejoin="round"/></svg>
<div class="b" style="left:3189.00px;top:1682.00px;width:84.00px;height:50.00px;background:#3d4759;border-radius:12px;"></div>
<div class="t" style="left:2231.00px;width:2000px;text-align:center;top:1697.88px;font-size:22px;line-height:22px;color:#8b94a3;font-weight:bold;font-family:'Liberation Sans', sans-serif;letter-spacing:1px;">PFL</div>
<div class="b" style="left:3289.00px;top:1678.00px;width:77.00px;height:58.00px;background:#3d4759;border-radius:12px;"></div>
<svg style="left:3307px;top:1687px" width="40" height="40" viewBox="-20 -20 40 40"><polygon points="0.00,-12.60 3.67,-8.87 8.91,-8.91 8.87,-3.67 12.60,0.00 8.87,3.67 8.91,8.91 3.67,8.87 0.00,12.60 -3.67,8.87 -8.91,8.91 -8.87,3.67 -12.60,0.00 -8.87,-3.67 -8.91,-8.91 -3.67,-8.87" fill="#8b94a3" stroke="#8b94a3" stroke-width="2.6" stroke-linejoin="round"/><circle cx="0" cy="0" r="5" fill="#3d4759"/></svg>
<div class="b" style="left:1762.00px;top:1773.00px;width:1604.00px;height:54.00px;background:#ea5560;border-radius:10px;"></div>
<div class="t" style="left:1564.80px;width:2000px;text-align:center;top:1789.73px;font-size:23px;line-height:23px;color:#ffffff;font-weight:bold;font-family:'Liberation Sans', sans-serif;letter-spacing:1.6px;">DISCONNECT</div>
<div class="t" style="left:1762.50px;top:1849.61px;font-size:25.5px;line-height:25.5px;color:#6b7280;font-weight:normal;font-family:'Liberation Sans', sans-serif;">Room: VW-test-video-2</div>
<div class="b" style="left:48px;top:1939px;width:1656px;height:400px;border-radius:16px;overflow:hidden;background:#374151">
<div class="b" style="left:2px;top:2px;width:1652px;height:400px;border-radius:14px;overflow:hidden;background:#000">
<div class="b" style="left:0px;top:0;width:208.0px;height:400px;background:#676767"></div>
<div class="b" style="left:207.5px;top:0;width:176.3px;height:400px;background:#c0c0c0"></div>
<div class="b" style="left:383.3px;top:0;width:177.59999999999997px;height:400px;background:#c0be40"></div>
<div class="b" style="left:560.4px;top:0;width:177.5px;height:400px;background:#58bec0"></div>
<div class="b" style="left:737.4px;top:0;width:177.39999999999998px;height:400px;background:#58bc3a"></div>
<div class="b" style="left:914.3px;top:0;width:177.4000000000001px;height:400px;background:#b028b8"></div>
<div class="b" style="left:1091.2px;top:0;width:177.39999999999986px;height:400px;background:#b02418"></div>
<div class="b" style="left:1268.1px;top:0;width:177.4000000000001px;height:400px;background:#0000c0"></div>
<div class="b" style="left:1445px;top:0;width:207.5px;height:400px;background:#676767"></div>
</div></div>
<svg style="left:1487.5px;top:1934px" width="220" height="220" viewBox="-110 -110 220 220"><circle cx="0" cy="0" r="103" fill="#5f5f5f"/><g stroke="#5ec4c0" stroke-width="1.6" stroke-dasharray="3 3" fill="none"><line x1="0" y1="-60" x2="0" y2="-40"/><line x1="-64" y1="-5.5" x2="-50" y2="-5.5"/><line x1="50" y1="-5.5" x2="64" y2="-5.5"/></g><rect x="-50.5" y="-39.6" width="101" height="68.5" rx="6" fill="#2c3850"/><rect x="-46" y="-34.7" width="45" height="30" rx="3" fill="#101418" stroke="#5ec4c0" stroke-width="1.6"/><rect x="1" y="-34.7" width="45" height="30" rx="3" fill="#101418" stroke="#4a5568" stroke-width="1"/><rect x="-46" y="1.7" width="45" height="28" rx="3" fill="#101418" stroke="#4a5568" stroke-width="1"/><rect x="1" y="1.7" width="45" height="28" rx="3" fill="#101418" stroke="#4a5568" stroke-width="1"/><circle cx="-40" cy="-28.5" r="1.9" fill="#e05050"/><circle cx="7" cy="-28.5" r="1.9" fill="#e05050"/><circle cx="-40" cy="7.5" r="1.9" fill="#e05050"/><circle cx="7" cy="7.5" r="1.9" fill="#e05050"/><g style="font-family:'Liberation Mono',monospace;font-size:5px" fill="#c8d0d8"><text x="-35" y="-26.5">CAM 1</text><text x="12" y="-26.5">CAM 2</text><text x="-35" y="9.5">CAM 3</text><text x="12" y="9.5">CAM 4</text></g><rect x="-43" y="-10" width="1" height="4" fill="#5ec4c0"/><rect x="-41" y="-13" width="1" height="7" fill="#5ec4c0"/><rect x="-39" y="-9" width="1" height="3" fill="#5ec4c0"/><rect x="-8" y="28" width="16" height="4" rx="1.5" fill="#2c3850"/><rect x="-19" y="33" width="38" height="2" rx="1" fill="#2c3850"/><g><circle cx="0" cy="-67" r="9.5" fill="none" stroke="#5ec4c0" stroke-width="0.8" opacity="0.6"/><circle cx="0" cy="-67" r="8" fill="#fff"/><circle cx="0" cy="-67" r="6.3" fill="#6cc6c2"/><circle cx="0" cy="-67" r="2.8" fill="#0a0f1a"/></g><g><circle cx="-72.5" cy="-5.5" r="9.5" fill="none" stroke="#5ec4c0" stroke-width="0.8" opacity="0.6"/><circle cx="-72.5" cy="-5.5" r="8" fill="#fff"/><circle cx="-72.5" cy="-5.5" r="6.3" fill="#6cc6c2"/><circle cx="-72.5" cy="-5.5" r="2.8" fill="#0a0f1a"/></g><g><circle cx="72.5" cy="-5.5" r="9.5" fill="none" stroke="#5ec4c0" stroke-width="0.8" opacity="0.6"/><circle cx="72.5" cy="-5.5" r="8" fill="#fff"/><circle cx="72.5" cy="-5.5" r="6.3" fill="#6cc6c2"/><circle cx="72.5" cy="-5.5" r="2.8" fill="#0a0f1a"/></g><text x="0" y="61.5" text-anchor="middle" style="font-family:'Liberation Sans',sans-serif;font-weight:bold;font-size:17px" fill="#fff" textLength="81" lengthAdjust="spacingAndGlyphs">Production</text><text x="0" y="77" text-anchor="middle" style="font-family:'Liberation Sans',sans-serif;font-size:17px" fill="#5ec4c0" textLength="76.5" lengthAdjust="spacingAndGlyphs">Connection</text></svg>
<div class="b" style="left:1736px;top:1939px;width:1656px;height:400px;border-radius:16px;overflow:hidden;background:#374151">
<div class="b" style="left:2px;top:2px;width:1652px;height:400px;border-radius:14px;overflow:hidden;background:#000">
<div class="b" style="left:0px;top:0;width:208.0px;height:400px;background:#676767"></div>
<div class="b" style="left:207.5px;top:0;width:176.3px;height:400px;background:#c0c0c0"></div>
<div class="b" style="left:383.3px;top:0;width:177.59999999999997px;height:400px;background:#c0be40"></div>
<div class="b" style="left:560.4px;top:0;width:177.5px;height:400px;background:#58bec0"></div>
<div class="b" style="left:737.4px;top:0;width:177.39999999999998px;height:400px;background:#58bc3a"></div>
<div class="b" style="left:914.3px;top:0;width:177.4000000000001px;height:400px;background:#b028b8"></div>
<div class="b" style="left:1091.2px;top:0;width:177.39999999999986px;height:400px;background:#b02418"></div>
<div class="b" style="left:1268.1px;top:0;width:177.4000000000001px;height:400px;background:#0000c0"></div>
<div class="b" style="left:1445px;top:0;width:207.5px;height:400px;background:#676767"></div>
</div></div>
<svg style="left:3175.5px;top:1934px" width="220" height="220" viewBox="-110 -110 220 220"><circle cx="0" cy="0" r="103" fill="#5f5f5f"/><g stroke="#5ec4c0" stroke-width="1.6" stroke-dasharray="3 3" fill="none"><line x1="0" y1="-60" x2="0" y2="-40"/><line x1="-64" y1="-5.5" x2="-50" y2="-5.5"/><line x1="50" y1="-5.5" x2="64" y2="-5.5"/></g><rect x="-50.5" y="-39.6" width="101" height="68.5" rx="6" fill="#2c3850"/><rect x="-46" y="-34.7" width="45" height="30" rx="3" fill="#101418" stroke="#5ec4c0" stroke-width="1.6"/><rect x="1" y="-34.7" width="45" height="30" rx="3" fill="#101418" stroke="#4a5568" stroke-width="1"/><rect x="-46" y="1.7" width="45" height="28" rx="3" fill="#101418" stroke="#4a5568" stroke-width="1"/><rect x="1" y="1.7" width="45" height="28" rx="3" fill="#101418" stroke="#4a5568" stroke-width="1"/><circle cx="-40" cy="-28.5" r="1.9" fill="#e05050"/><circle cx="7" cy="-28.5" r="1.9" fill="#e05050"/><circle cx="-40" cy="7.5" r="1.9" fill="#e05050"/><circle cx="7" cy="7.5" r="1.9" fill="#e05050"/><g style="font-family:'Liberation Mono',monospace;font-size:5px" fill="#c8d0d8"><text x="-35" y="-26.5">CAM 1</text><text x="12" y="-26.5">CAM 2</text><text x="-35" y="9.5">CAM 3</text><text x="12" y="9.5">CAM 4</text></g><rect x="-43" y="-10" width="1" height="4" fill="#5ec4c0"/><rect x="-41" y="-13" width="1" height="7" fill="#5ec4c0"/><rect x="-39" y="-9" width="1" height="3" fill="#5ec4c0"/><rect x="-8" y="28" width="16" height="4" rx="1.5" fill="#2c3850"/><rect x="-19" y="33" width="38" height="2" rx="1" fill="#2c3850"/><g><circle cx="0" cy="-67" r="9.5" fill="none" stroke="#5ec4c0" stroke-width="0.8" opacity="0.6"/><circle cx="0" cy="-67" r="8" fill="#fff"/><circle cx="0" cy="-67" r="6.3" fill="#6cc6c2"/><circle cx="0" cy="-67" r="2.8" fill="#0a0f1a"/></g><g><circle cx="-72.5" cy="-5.5" r="9.5" fill="none" stroke="#5ec4c0" stroke-width="0.8" opacity="0.6"/><circle cx="-72.5" cy="-5.5" r="8" fill="#fff"/><circle cx="-72.5" cy="-5.5" r="6.3" fill="#6cc6c2"/><circle cx="-72.5" cy="-5.5" r="2.8" fill="#0a0f1a"/></g><g><circle cx="72.5" cy="-5.5" r="9.5" fill="none" stroke="#5ec4c0" stroke-width="0.8" opacity="0.6"/><circle cx="72.5" cy="-5.5" r="8" fill="#fff"/><circle cx="72.5" cy="-5.5" r="6.3" fill="#6cc6c2"/><circle cx="72.5" cy="-5.5" r="2.8" fill="#0a0f1a"/></g><text x="0" y="61.5" text-anchor="middle" style="font-family:'Liberation Sans',sans-serif;font-weight:bold;font-size:17px" fill="#fff" textLength="81" lengthAdjust="spacingAndGlyphs">Production</text><text x="0" y="77" text-anchor="middle" style="font-family:'Liberation Sans',sans-serif;font-size:17px" fill="#5ec4c0" textLength="76.5" lengthAdjust="spacingAndGlyphs">Connection</text></svg>
</body></html>
